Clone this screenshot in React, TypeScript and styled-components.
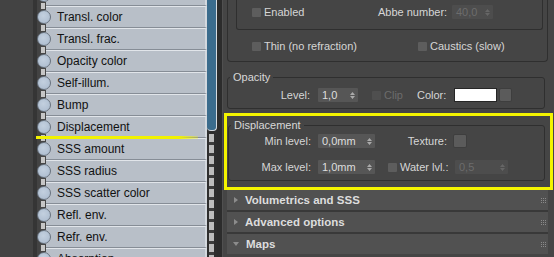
import React from "react";
import styled, { createGlobalStyle } from "styled-components";

const GlobalStyle = createGlobalStyle`
  html, body {
    margin: 0;
    padding: 0;
    background: #3c3c3c;
    overflow: hidden;
  }
  body {
    font-family: "Liberation Sans", Arial, sans-serif;
  }
`;

// first entry sits above the top edge, only its socket shows
const slots = [
  "",
  "Transl. color",
  "Transl. frac.",
  "Opacity color",
  "Self-illum.",
  "Bump",
  "Displacement",
  "SSS amount",
  "SSS radius",
  "SSS scatter color",
  "Refl. env.",
  "Refr. env.",
  "Absorption",
];

const Screen = styled.div`
  display: flex;
  width: 554px;
  height: 257px;
  overflow: hidden;
  background: #434343;
`;

const Canvas = styled.div`
  width: 37px;
  flex: none;
  background: #434343;
  box-shadow: inset -4px 0 0 #353535;
`;

const NodeColumn = styled.div`
  display: flex;
  flex: none;
  width: 180px;
`;

const SlotList = styled.div`
  flex: 1;
  display: flex;
  flex-direction: column;
  margin-top: -16px;
`;

const SlotRow = styled.div`
  position: relative;
  display: flex;
  align-items: center;
  height: 22px;
  flex: none;

  &::before {
    content: "";
    position: absolute;
    left: 3px;
    top: -4px;
    width: 4px;
    height: 6px;
    background: #c6c6c6;
    border: 1px solid #474747;
  }
`;

const Socket = styled.div`
  position: relative;
  z-index: 1;
  flex: none;
  width: 14px;
  height: 14px;
  box-sizing: border-box;
  border-radius: 50%;
  border: 1px solid #67717d;
  background: radial-gradient(circle at 45% 40%, #c3d0df, #a9b9cc);
`;

const SlotBody = styled.div`
  flex: 1;
  align-self: stretch;
  display: flex;
  align-items: center;
  margin-left: -7px;
  padding-left: 13px;
  box-sizing: border-box;
  background: #b8bfc8;
  border-top: 1px solid #e1e5ea;
  border-bottom: 1px solid #868d96;
  border-right: 2px solid #d3d8de;
  font-size: 12px;
  color: #111111;
  white-space: nowrap;
`;

const Marker = styled.div`
  position: absolute;
  z-index: 2;
  left: -1px;
  bottom: -1px;
  width: 162px;
  height: 3px;
  background: linear-gradient(to right, #f2f200 88%, rgba(242, 242, 0, 0.25));
`;

const Rail = styled.div`
  width: 10px;
  flex: none;
  display: flex;
  flex-direction: column;
  background: #2e2e2e;
`;

const BlueBar = styled.div`
  height: 131px;
  flex: none;
  box-sizing: border-box;
  background: #3b6c8d;
  border-right: 1px solid #d6dbe0;
  border-bottom: 1px solid #d6dbe0;
  border-radius: 0 0 4px 4px;
`;

const Chain = styled.div`
  flex: 1;
  margin: 3px 3px 0 2px;
  background: repeating-linear-gradient(
    to bottom,
    #bdbdbd 0 8px,
    #3e3e3e 8px 11px
  );
`;

const Gutter = styled.div`
  width: 5px;
  flex: none;
  background: #2c2c2c;
  border-right: 1px solid #505050;
`;

const Inspector = styled.div`
  flex: 1;
  display: flex;
  flex-direction: column;
  padding: 0 6px 0 4px;
  background: #454545;
  font-size: 11px;
  color: #d6d6d6;
  white-space: nowrap;
`;

const TopRollout = styled.div`
  flex: none;
  height: 72px;
  margin-top: -10px;
  box-sizing: border-box;
  border: 1px solid #2f2f2f;
  border-top: none;
  border-radius: 0 0 4px 4px;
  padding: 0 4px 0 8px;
  display: flex;
  flex-direction: column;
`;

const InnerGroup = styled.div`
  flex: none;
  height: 40px;
  box-sizing: border-box;
  border: 1px solid #2f2f2f;
  border-top: none;
  border-radius: 0 0 3px 3px;
  padding: 15px 0 0 15px;
`;

const Row = styled.div<{ $top?: number; $left?: number }>`
  display: flex;
  align-items: center;
  height: 14px;
  flex: none;
  margin-top: ${(p) => p.$top ?? 0}px;
  padding-left: ${(p) => p.$left ?? 0}px;
`;

const CheckCell = styled.div<{ $w: number; $off?: boolean }>`
  display: flex;
  align-items: center;
  gap: 3px;
  width: ${(p) => p.$w}px;
  flex: none;
  color: ${(p) => (p.$off ? "#6c6c6c" : "inherit")};
`;

const Box = styled.span<{ $off?: boolean }>`
  width: 9px;
  height: 9px;
  flex: none;
  background: ${(p) => (p.$off ? "#4f4f4f" : "#5d5d5d")};
  border-radius: 1px;
`;

const Label = styled.span<{ $w: number; $gap: number }>`
  width: ${(p) => p.$w}px;
  margin-right: ${(p) => p.$gap}px;
  flex: none;
  text-align: right;
`;

const Spacer = styled.span<{ $w: number }>`
  width: ${(p) => p.$w}px;
  flex: none;
`;

const SpinBox = styled.div<{ $w: number; $off?: boolean }>`
  display: flex;
  align-items: center;
  justify-content: space-between;
  flex: none;
  width: ${(p) => p.$w}px;
  height: 14px;
  box-sizing: border-box;
  padding: 0 3px 0 4px;
  border-radius: 1px;
  background: ${(p) => (p.$off ? "#4d4d4d" : "#565656")};
  color: ${(p) => (p.$off ? "#6c6c6c" : "#dedede")};
`;

const Swatch = styled.div`
  width: 43px;
  height: 14px;
  flex: none;
  box-sizing: border-box;
  margin-right: 2px;
  background: #ffffff;
  border: 1px solid #262626;
`;

const MapButton = styled.div<{ $w: number }>`
  width: ${(p) => p.$w}px;
  height: 14px;
  flex: none;
  box-sizing: border-box;
  background: #5b5b5b;
  border: 1px solid #3e3e3e;
  border-radius: 2px;
`;

const Group = styled.fieldset`
  margin: 9px 3px 0 0;
  padding: 4px 0 6px 0;
  min-width: 0;
  border: 1px solid #2f2f2f;
  border-radius: 3px;
`;

const DispGroup = styled(Group)`
  margin: 0;
  padding: 2px 0 6px 0;
`;

const Legend = styled.legend`
  margin-left: 2px;
  padding: 0 3px;
  line-height: 13px;
  font-size: 11px;
  color: #d8d8d8;
`;

const HighlightFrame = styled.div`
  position: relative;
  z-index: 1;
  flex: none;
  margin: 4px -5px -2px -3px;
  padding: 3px 5px 6px 1px;
  border: 3px solid #f4f400;
`;

const Header = styled.div`
  display: flex;
  align-items: center;
  flex: none;
  height: 22px;
  box-sizing: border-box;
  border-top: 2px solid #393939;
  padding: 0 2px 0 7px;
  background: #515151;
  font-size: 11.5px;
  font-weight: bold;
  color: #dddddd;
`;

const Arrow = styled.span<{ $open?: boolean }>`
  width: 0;
  height: 0;
  flex: none;
  ${(p) =>
    p.$open
      ? `border-top: 4px solid #8c8c8c;
         border-left: 3px solid transparent;
         border-right: 3px solid transparent;
         margin-left: -1px;`
      : `border-left: 4px solid #8c8c8c;
         border-top: 3px solid transparent;
         border-bottom: 3px solid transparent;`}
`;

const HeaderTitle = styled.span`
  margin-left: 7px;
  flex: 1;
`;

const Arrows = ({ off }: { off?: boolean }) => (
  <svg width="5" height="9" viewBox="0 0 5 9">
    <path d="M0 4 L2.5 1 L5 4 Z M0 5 L2.5 8 L5 5 Z" fill={off ? "#666" : "#aaa"} />
  </svg>
);

const Grip = () => (
  <svg width="5" height="5" viewBox="0 0 5 5">
    {[0, 2, 4].map((y) =>
      [0, 2, 4].map((x) => (
        <rect key={`${x}-${y}`} x={x} y={y} width="1" height="1" fill="#8a8a8a" />
      ))
    )}
  </svg>
);

const Spinner = (props: { value: string; w: number; off?: boolean }) => (
  <SpinBox $w={props.w} $off={props.off}>
    <span>{props.value}</span>
    <Arrows off={props.off} />
  </SpinBox>
);

const Check = (props: { label: string; w: number; off?: boolean }) => (
  <CheckCell $w={props.w} $off={props.off}>
    <Box $off={props.off} />
    <span>{props.label}</span>
  </CheckCell>
);

const Rollout = (props: { title: string; open?: boolean }) => (
  <Header>
    <Arrow $open={props.open} />
    <HeaderTitle>{props.title}</HeaderTitle>
    <Grip />
  </Header>
);

export default function App() {
  return (
    <>
      <GlobalStyle />
      <Screen>
        <Canvas />
        <NodeColumn>
          <SlotList>
            {slots.map((name, i) => (
              <SlotRow key={i}>
                <Socket />
                <SlotBody>{name}</SlotBody>
                {name === "Displacement" && <Marker />}
              </SlotRow>
            ))}
          </SlotList>
          <Rail>
            <BlueBar />
            <Chain />
          </Rail>
        </NodeColumn>
        <Gutter />
        <Inspector>
          <TopRollout>
            <InnerGroup>
              <Row>
                <Check label="Enabled" w={126} />
                <Label $w={63} $gap={11}>Abbe number:</Label>
                <Spinner value="40,0" w={41} off />
              </Row>
            </InnerGroup>
            <Row $top={9} $left={16}>
              <Check label="Thin (no refraction)" w={166} />
              <Check label="Caustics (slow)" w={100} />
            </Row>
          </TopRollout>

          <Group>
            <Legend>Opacity</Legend>
            <Row>
              <Label $w={82} $gap={8}>Level:</Label>
              <Spinner value="1,0" w={40} />
              <Spacer $w={14} />
              <Check label="Clip" w={45} off />
              <Label $w={28} $gap={9}>Color:</Label>
              <Swatch />
              <MapButton $w={13} />
            </Row>
          </Group>

          <HighlightFrame>
            <DispGroup>
              <Legend>Displacement</Legend>
              <Row>
                <Label $w={82} $gap={7}>Min level:</Label>
                <Spinner value="0,0mm" w={57} />
                <Label $w={72} $gap={6}>Texture:</Label>
                <MapButton $w={14} />
              </Row>
              <Row $top={12}>
                <Label $w={82} $gap={7}>Max level:</Label>
                <Spinner value="1,0mm" w={57} />
                <Spacer $w={13} />
                <Check label="Water lvl.:" w={67} />
                <Spinner value="0,5" w={53} off />
              </Row>
            </DispGroup>
          </HighlightFrame>

          <Rollout title="Volumetrics and SSS" />
          <Rollout title="Advanced options" />
          <Rollout title="Maps" open />
        </Inspector>
      </Screen>
    </>
  );
}
